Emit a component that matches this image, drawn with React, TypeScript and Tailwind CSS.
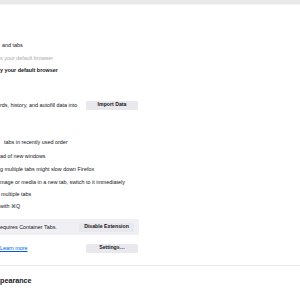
import React from "react";

const Btn = ({ children, w }: { children: React.ReactNode; w: string }) => (
  <div
    className={`${w} h-[9px] flex items-center justify-center rounded-[1.5px] bg-[#e9e9ed] text-[5.2px] font-semibold text-[#15141a]`}
  >
    {children}
  </div>
);

export default function App() {
  return (
    <div
      className="w-[300px] h-[300px] overflow-hidden bg-white text-[#15141a] flex flex-col"
      style={{ fontFamily: '"Liberation Sans", Arial, sans-serif' }}
    >
      <div className="h-[5px] bg-[#e9e9e9] border-b border-[#f3f3f3] shrink-0" />
      <div className="flex flex-col text-[5.4px] whitespace-nowrap">
        <div className="mt-[34px] h-[12px] leading-[12px] ml-[2px]">and tabs</div>
        <div className="mt-[1px] h-[12px] leading-[12px] text-[#ababab]">s your default browser</div>
        <div className="h-[12px] leading-[12px] font-bold">y your default browser</div>

        <div className="mt-[23px] h-[12px] flex items-center">
          <span className="w-[86px]">rds, history, and autofill data into</span>
          <Btn w="w-[52px]">Import Data</Btn>
        </div>

        <div className="mt-[25px] h-[12px] leading-[12px] ml-[4px]">tabs in recently used order</div>
        <div className="mt-[2px] h-[12px] leading-[12px]">ad of new windows</div>
        <div className="mt-[1px] h-[12px] leading-[12px]">g multiple tabs might slow down Firefox</div>
        <div className="mt-[1px] h-[12px] leading-[12px]">mage or media in a new tab, switch to it immediately</div>
        <div className="h-[12px] leading-[12px] ml-[1px]">multiple tabs</div>
        <div className="h-[12px] leading-[12px]">with ⌘Q</div>

        <div className="mt-[7px] h-[16px] w-[139px] bg-[#f0f0f4] rounded-r-[2px] flex items-center justify-between pr-[5px]">
          <span>equires Container Tabs.</span>
          <Btn w="w-[55px]">Disable Extension</Btn>
        </div>

        <div className="mt-[7px] h-[12px] flex items-center">
          <span className="w-[86px] text-[#0061e0] underline">Learn more</span>
          <Btn w="w-[52px]">Settings…</Btn>
        </div>

        <div className="mt-[11px] h-[1px] w-[300px] bg-[#ececec]" />

        <div className="mt-[9px] h-[12px] leading-[12px] text-[7.2px] font-bold">pearance</div>
      </div>
    </div>
  );
}
